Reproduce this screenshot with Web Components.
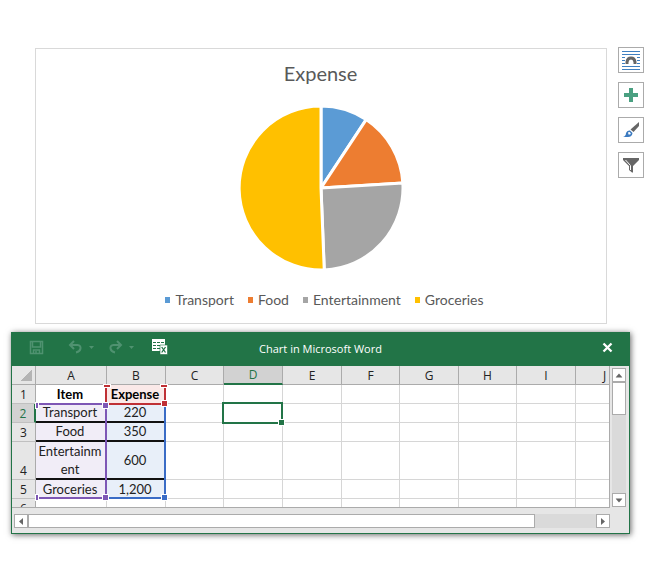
<!DOCTYPE html>
<html lang="en">
<head>
<meta charset="utf-8">
<title>Chart in Microsoft Word</title>
<style>
html, body { margin: 0; background: #fff; }
body { font-family: Lato, "Liberation Sans", sans-serif; overflow-x: hidden; }
</style>
</head>
<body>
<word-page></word-page>

<script>
const define = (name, html, setup) => customElements.define(name, class extends HTMLElement {
  connectedCallback() {
    if (this.shadowRoot) return;
    this.attachShadow({ mode: "open" }).innerHTML = html;
    if (setup) setup(this.shadowRoot, this);
  }
});

define("tool-button", `
<style>
:host { display: block; }
button { display: grid; place-items: center; width: 26px; height: 26px; padding: 0; box-sizing: border-box;
  background: #fff; border: 1px solid #ababab; }
</style>
<button type="button"><slot></slot></button>`, (root, host) => {
  root.querySelector("button").setAttribute("aria-label", host.getAttribute("label"));
});

define("legend-item", `
<style>
:host { display: flex; align-items: center; gap: 5px; }
i { width: 5px; height: 6px; background: var(--swatch); }
</style>
<i></i><span><slot></slot></span>`);

define("pie-chart", `
<style>
:host { display: block; box-sizing: border-box; border: 1px solid #d9d9d9; background: #fff; color: #595959;
  padding: 10px 1px 13px 0; }
h1 { margin: 0; font-size: 20px; line-height: 28px; font-weight: 400; text-align: center; }
svg { display: block; margin: 19px auto 0; }
.legend { display: flex; justify-content: center; gap: 14px; margin-top: 20px; padding-left: 8px; font-size: 14px; line-height: 20px; }
</style>
<h1>Expense</h1>
<svg width="164" height="164" viewBox="-82 -82 164 164" role="img" aria-label="Pie chart of expenses" stroke="#fff" stroke-width="3" stroke-linejoin="round"></svg>
<div class="legend">
<legend-item style="--swatch:#5b9bd5">Transport</legend-item>
<legend-item style="--swatch:#ed7d31">Food</legend-item>
<legend-item style="--swatch:#a5a5a5">Entertainment</legend-item>
<legend-item style="--swatch:#ffc000">Groceries</legend-item>
</div>`, root => {
  const slices = [[220, "#5b9bd5"], [350, "#ed7d31"], [600, "#a5a5a5"], [1200, "#ffc000"]];
  const total = slices.reduce((sum, s) => sum + s[0], 0);
  const point = a => `${(82 * Math.sin(a)).toFixed(2)} ${(-82 * Math.cos(a)).toFixed(2)}`;
  let angle = 0, paths = "";
  for (const [value, fill] of slices) {
    const end = angle + value / total * 2 * Math.PI;
    paths += `<path fill="${fill}" d="M0 0L${point(angle)}A82 82 0 ${end - angle > Math.PI ? 1 : 0} 1 ${point(end)}Z"/>`;
    angle = end;
  }
  root.querySelector("svg").innerHTML = paths;
});

define("title-bar", `
<style>
:host { display: grid; grid-template-columns: 1fr auto 1fr; align-items: center; height: 34px; background: #227447; color: #fff;
  font-family: "Open Sans", "Noto Sans", sans-serif; }
nav { display: flex; align-items: center; padding: 0 2px 4px 17px; }
button { padding: 0; border: 0; background: none; color: inherit; display: block; }
svg { display: block; }
.dim { color: #4f9270; }
h2 { margin: 0; font-size: 11px; font-weight: 400; line-height: 16px; }
.undo { margin-left: 24px; } .caret { margin-left: 6px; } .redo { margin-left: 14px; } .edit { margin-left: 18px; }
.close { justify-self: end; margin: 0 16px 4px 0; }
</style>
<nav>
<button type="button" class="dim" aria-label="Save"><svg width="15" height="15" fill="none" stroke="currentColor" stroke-width="1.5"><path d="M1.500 1.500H13.500V13.500H1.500ZM3.500 2V7H11.500V2M4.500 13V10H10.500V13"/><path d="M7 11V13"/></svg></button>
<button type="button" class="dim undo" aria-label="Undo"><svg width="15" height="15" fill="none" stroke="currentColor" stroke-width="2"><path d="M6 1L2 5L6 9M2.500 5H9.500Q13 5.500 12.500 8.500Q12 11.500 8 12.500"/></svg></button>
<button type="button" class="dim caret" aria-label="Undo list"><svg width="5" height="3" fill="currentColor"><path d="M0 0H5L2.500 3Z"/></svg></button>
<button type="button" class="dim redo" aria-label="Redo"><svg width="15" height="15" fill="none" stroke="currentColor" stroke-width="2"><path d="M9 1L13 5L9 9M12.500 5H5.500Q2 5.500 2.500 8.500Q3 11.500 7 12.500"/></svg></button>
<button type="button" class="dim caret" aria-label="Redo list"><svg width="5" height="3" fill="currentColor"><path d="M0 0H5L2.500 3Z"/></svg></button>
<button type="button" class="edit" aria-label="Edit data in Excel"><svg width="16" height="16"><path fill="#fff" d="M0 0H13V12H0Z"/><path stroke="#227447" d="M1 3.500H4M5 3.500H8M9 3.500H12M1 6.500H4M5 6.500H8M9 6.500H12M1 9.500H4M5 9.500H8"/><path fill="#fff" stroke="#227447" stroke-width=".6" d="M8 6H15.500V15.500H8Z"/><path fill="none" stroke="#227447" stroke-width="1.300" d="M9.700 8L13.500 13.500M13.500 8L9.700 13.500"/></svg></button>
</nav>
<h2>Chart in Microsoft Word</h2>
<button type="button" class="close" aria-label="Close"><svg width="11" height="11" stroke="currentColor" stroke-width="2.300"><path d="M1.500 1.500L9.500 9.500M9.500 1.500L1.500 9.500"/></svg></button>`);

define("range-box", `
<style>
:host { position: absolute; box-sizing: border-box; pointer-events: none; border: 0 solid var(--line); }
i { position: absolute; width: 5px; height: 5px; background: var(--line); box-shadow: 0 0 0 1px #fff; }
.tr { top: -2px; right: -3px; } .br { bottom: -3px; right: -3px; }
.left-top { top: -2px; left: 0; width: 2px; } .left-bottom { bottom: -3px; left: 0; width: 2px; }
.top-left { top: 0; left: -3px; height: 2px; width: 6px; } .top-right { top: 0; right: -3px; height: 2px; width: 6px; }
</style>`, (root, host) => {
  for (const corner of host.getAttribute("handles").split(" "))
    root.innerHTML += `<i class="${corner}"></i>`;
});

define("data-sheet", `
<style>
:host { display: block; position: relative; overflow: hidden; height: 142px; box-sizing: border-box;
  border-right: 1px solid #ababab; border-bottom: 1px solid #ababab; }
table { table-layout: fixed; width: 625px; border-collapse: separate; border-spacing: 0; font-size: 13px; line-height: 17px; }
th, td { box-sizing: border-box; height: 19px; padding: 0; text-align: center; border: 0 solid #d6d6d6; border-width: 0 1px 1px 0; background: #fff; }
thead th, tbody th { background: #e6e6e6; color: #222; font: 400 12px/17px "Open Sans", "Noto Sans", sans-serif; border-color: #ababab; }
thead th:first-child { background: linear-gradient(135deg, transparent 50%, #b4b4b4 50%) 9px 4px / 11px 11px no-repeat #e6e6e6; }
thead th:last-child { padding-right: 3px; }
tbody th { border-bottom-color: #c0c0c0; vertical-align: bottom; }
thead .on { background: #d2d2d2; color: #227447; border-bottom: 2px solid #227447; }
tbody .on { background: #d2d2d2; color: #227447; border-right: 2px solid #227447; }
td { color: #222; overflow-wrap: anywhere; }
.head td { font-weight: 700; color: #000; padding-right: 2px; }
.data td:nth-child(2), .data td:nth-child(3) { border-bottom: 2px solid #111; padding: 0 3px 0 1px; }
.data:nth-child(4) td { line-height: 18px; }
.data:nth-child(5) td { border-bottom: 1px solid #d6d6d6 !important; }
.data td:nth-child(2) { background: #f1edf7; }
.data td:nth-child(3) { background: #e8eff9; }
.head td:nth-child(3) { background: #fae9e8; }
.keys { --line: #7e57b5; left: 24px; top: 37px; width: 71px; height: 96px; border-width: 2px 2px 2px 0; }
.vals { --line: #3a6cc6; left: 95px; top: 37px; width: 59px; height: 96px; border-width: 0 2px 2px 0; }
.name { --line: #bf3035; left: 93px; top: 19px; width: 61px; height: 20px; border-width: 0 2px 2px 2px; }
.cursor { --line: #227447; left: 210px; top: 36px; width: 61px; height: 22px; border-width: 2px; }
</style>
<table>
<colgroup><col style="width:24px"><col style="width:71px"><col style="width:59px"><col style="width:58px"><col style="width:59px"><col style="width:59px"><col style="width:58px"><col style="width:59px"><col style="width:58px"><col style="width:59px"><col style="width:61px"></colgroup>
<thead><tr></tr></thead><tbody></tbody></table>
<range-box class="vals" handles="br"></range-box>
<range-box class="name" handles="top-left top-right br"></range-box>
<range-box class="keys" handles="left-top tr left-bottom br"></range-box>
<range-box class="cursor" handles="br"></range-box>`, root => {
  root.querySelector("thead tr").innerHTML = `<th aria-label="Select all"></th>` +
    [..."ABCDEFGHIJ"].map(c => `<th scope="col"${c === "D" ? ' class="on"' : ""}>${c}</th>`).join("");
  const rows = [["Item", "Expense"], ["Transport", "220"], ["Food", "350"], ["Entertainment", "600"], ["Groceries", "1,200"], ["", ""]];
  root.querySelector("tbody").innerHTML = rows.map((r, i) =>
    `<tr class="${i === 0 ? "head" : i < 5 ? "data" : ""}"><th scope="row"${i === 1 ? ' class="on"' : ""}>${i + 1}</th>` +
    r.map(t => `<td>${t}</td>`).join("") + "<td></td>".repeat(8) + "</tr>").join("");
});

define("scroll-bar", `
<style>
:host { display: flex; background: #dadada; }
:host([vertical]) { flex-direction: column; width: 14px; }
:host(:not([vertical])) { height: 14px; }
button { flex: none; display: grid; place-items: center; width: 14px; height: 14px; padding: 0; box-sizing: border-box; background: #fff; border: 1px solid #ababab; }
.thumb { box-sizing: border-box; background: #fff; border: 1px solid #ababab; flex: none; }
:host([vertical]) .thumb { height: 33px; }
:host(:not([vertical])) .thumb { width: 85%; }
.space { flex: 1; }
svg { fill: #666; display: block; }
:host([vertical]) svg { transform: rotate(90deg); }
</style>
<button type="button" aria-label="Scroll back"><svg width="6" height="7"><path d="M5 0V7L1 3.500Z"/></svg></button>
<div class="thumb"></div><div class="space"></div>
<button type="button" aria-label="Scroll forward"><svg width="6" height="7"><path d="M1 0V7L5 3.500Z"/></svg></button>`);

define("sheet-window", `
<style>
:host { display: block; box-sizing: border-box; border: 1px solid #227447; border-top: 0; background: #e6e6e6;
  box-shadow: 1px 1px 6px rgba(0,0,0,.6); position: relative; }
.body { display: grid; grid-template-columns: minmax(0, 1fr) 14px; column-gap: 2px; row-gap: 6px; padding: 0 3px 5px 0; }
.v { margin: 2px 0 1px; }
.h { margin-left: 2px; }
</style>
<title-bar></title-bar>
<div class="body">
<data-sheet></data-sheet>
<scroll-bar class="v" vertical></scroll-bar>
<scroll-bar class="h"></scroll-bar>
</div>`);

define("word-page", `
<style>
:host { display: block; padding: 47px 30px 33px 11px; }
.top { display: grid; grid-template-columns: minmax(0, 1fr) 26px; column-gap: 11px; margin: 0 -14px 0 24px; align-items: start; }
.tools { display: grid; gap: 9px; }
pie-chart { margin-top: 1px; }
sheet-window { margin-top: 8px; }
svg { display: block; }
</style>
<div class="top">
<pie-chart></pie-chart>
<div class="tools">
<tool-button label="Layout options"><svg width="20" height="20" fill="none" stroke="#3f7fc0" stroke-width="1"><path d="M1 1.500H19M1 4.500H19M1 7.500H4M16 7.500H19M1 10.500H4M16 10.500H19M1 13.500H4M16 13.500H19M1 16.500H19M1 19.500H19"/><path stroke="#666" stroke-width="3" d="M6 14V12Q6.500 8 10 8T14 12V14"/></svg></tool-button>
<tool-button label="Chart elements"><svg width="14" height="14" fill="#4aa081"><path d="M5 0H9V5H14V9H9V14H5V9H0V5H5Z"/></svg></tool-button>
<tool-button label="Chart styles"><svg width="18" height="18"><path fill="#666" d="M17 1V5L11.500 11L8.500 8.500Z"/><path fill="#3b7ac0" d="M1 16Q4 15 4 12Q5 9 8 9.500L10.500 12Q10 16 6 16Z"/><path fill="#fff" d="M6 11.500Q7.500 10.500 8.500 12T6.500 13.500Z"/></svg></tool-button>
<tool-button label="Chart filters"><svg width="18" height="18"><path fill="#666" d="M1 2H17V4L11 10V16.500H10L7 14V10L1 4Z"/><path stroke="#fff" stroke-width="1" fill="none" d="M3.500 4L8.500 9.500V14"/></svg></tool-button>
</div>
</div>
<sheet-window></sheet-window>`);
</script>
</body>
</html>
